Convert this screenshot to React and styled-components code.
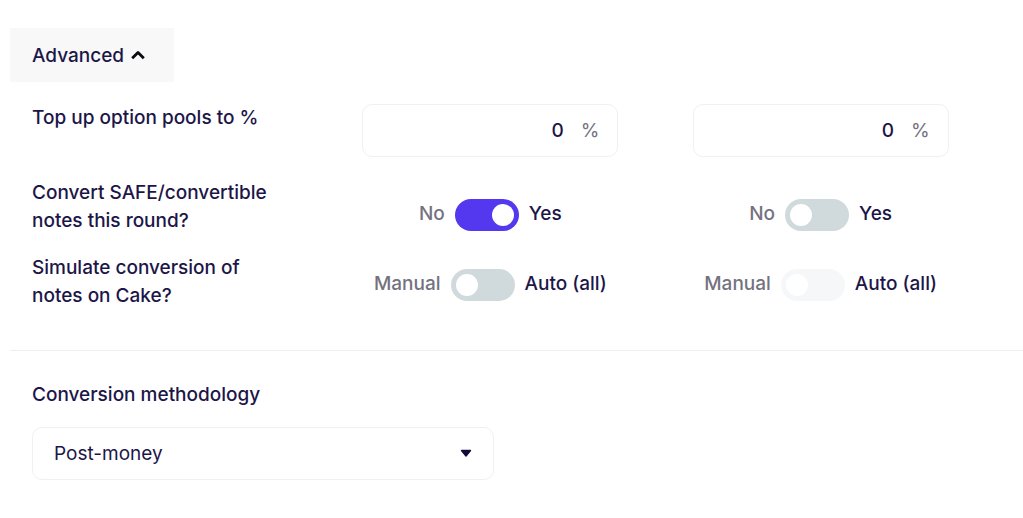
import React, { useState } from "react";
import styled, { createGlobalStyle } from "styled-components";

const GlobalStyle = createGlobalStyle`
  *, *::before, *::after { box-sizing: border-box; }
  body {
    margin: 0;
    background: #ffffff;
    color: #1c1648;
    font-family: Inter, "Liberation Sans", sans-serif;
    font-size: 19px;
    line-height: 28px;
    font-weight: 500;
  }
  button, input, select { font: inherit; color: inherit; }
`;

const Page = styled.main`
  padding: 28px 0 36px 10px;
`;

const AdvancedButton = styled.button`
  display: flex;
  align-items: center;
  gap: 6px;
  height: 54px;
  padding: 2px 28px 0 22px;
  border: 0;
  background: #f8f8f8;
  cursor: pointer;
`;

const Settings = styled.section`
  display: grid;
  grid-template-columns: repeat(3, 1fr);
  grid-auto-rows: minmax(56px, auto);
  padding: 22px 0 40px 22px;
  row-gap: 19px;
`;

const RowLabel = styled.div`
  max-width: 250px;
`;

const Cell = styled.div`
  width: 256px;
  padding-top: ${({ $top = 0 }) => $top}px;
`;

const PercentField = styled.label`
  display: flex;
  align-items: center;
  height: 53px;
  padding: 0 18px;
  border: 1px solid #eff1f3;
  border-radius: 10px;
`;

const PercentInput = styled.input`
  flex: 1;
  min-width: 0;
  padding: 0;
  border: 0;
  outline: 0;
  background: transparent;
  text-align: right;
`;

const Unit = styled.span`
  margin-left: 17px;
  color: #74727f;
  font-weight: 400;
`;

const ToggleLabel = styled.label`
  display: flex;
  align-items: center;
  justify-content: center;
  gap: 10px;
`;

const ToggleText = styled.span`
  padding-bottom: 2px;
  color: ${({ $muted }) => ($muted ? "#74727f" : "inherit")};
`;

const Switch = styled.input`
  appearance: none;
  display: flex;
  align-items: center;
  width: 64px;
  height: 32px;
  margin: 0;
  padding: 0 5px;
  border-radius: 16px;
  background: #d0dadc;
  &::before {
    content: "";
    width: 22px;
    height: 22px;
    border-radius: 50%;
    background: #ffffff;
  }
  &:checked { background: #5438f0; justify-content: flex-end; }
  &:disabled { background: #f5f7f8; }
`;

const Methodology = styled.section`
  display: flex;
  flex-direction: column;
  gap: 18px;
  padding: 30px 22px 0;
  border-top: 1px solid #eceff0;
`;

const SelectBox = styled.div`
  display: grid;
  align-items: center;
  max-width: 462px;
  > * { grid-area: 1 / 1; }
  > svg { justify-self: end; margin-right: 22px; pointer-events: none; }
`;

const Select = styled.select`
  appearance: none;
  width: 100%;
  height: 53px;
  padding: 0 21px;
  border: 1px solid #eff1f3;
  border-radius: 10px;
  background: #ffffff;
  font-weight: 400;
`;

function Percent({ label }) {
  return (
    <Cell>
      <PercentField>
        <PercentInput aria-label={label} defaultValue="0" inputMode="decimal" />
        <Unit>%</Unit>
      </PercentField>
    </Cell>
  );
}

function Toggle({ off, on, label, top, ...input }) {
  return (
    <Cell $top={top}>
      <ToggleLabel>
        <ToggleText $muted>{off}</ToggleText>
        <Switch type="checkbox" role="switch" aria-label={label} {...input} />
        <ToggleText>{on}</ToggleText>
      </ToggleLabel>
    </Cell>
  );
}

export default function App() {
  const [open, setOpen] = useState(true);
  return (
    <Page>
      <GlobalStyle />
      <AdvancedButton type="button" aria-expanded={open} onClick={() => setOpen(!open)}>
        Advanced
        <svg width="16" height="12" viewBox="0 0 16 12" fill="none" aria-hidden="true">
          <path d="M2.2 8.2L8 2.4l5.8 5.8" stroke="#0b0b0f" strokeWidth="2.8" strokeLinejoin="round" />
        </svg>
      </AdvancedButton>
      {open && (
        <Settings>
          <RowLabel>Top up option pools to %</RowLabel>
          <Percent label="Top up option pools, round 1" />
          <Percent label="Top up option pools, round 2" />
          <RowLabel>Convert SAFE/convertible notes this round?</RowLabel>
          <Toggle top={20} off="No" on="Yes" label="Convert notes, round 1" defaultChecked />
          <Toggle top={20} off="No" on="Yes" label="Convert notes, round 2" />
          <RowLabel>Simulate conversion of notes on Cake?</RowLabel>
          <Toggle top={15} off="Manual" on="Auto (all)" label="Simulate conversion, round 1" />
          <Toggle top={15} off="Manual" on="Auto (all)" label="Simulate conversion, round 2" disabled />
        </Settings>
      )}
      <Methodology>
        <label htmlFor="methodology">Conversion methodology</label>
        <SelectBox>
          <Select id="methodology" defaultValue="post">
            <option value="post">Post-money</option>
            <option value="pre">Pre-money</option>
          </Select>
          <svg width="12" height="9" viewBox="0 0 12 9" aria-hidden="true">
            <path d="M1.5 1.5h9L6 7z" fill="#120b3c" stroke="#120b3c" strokeWidth="1.4" strokeLinejoin="round" />
          </svg>
        </SelectBox>
      </Methodology>
    </Page>
  );
}
